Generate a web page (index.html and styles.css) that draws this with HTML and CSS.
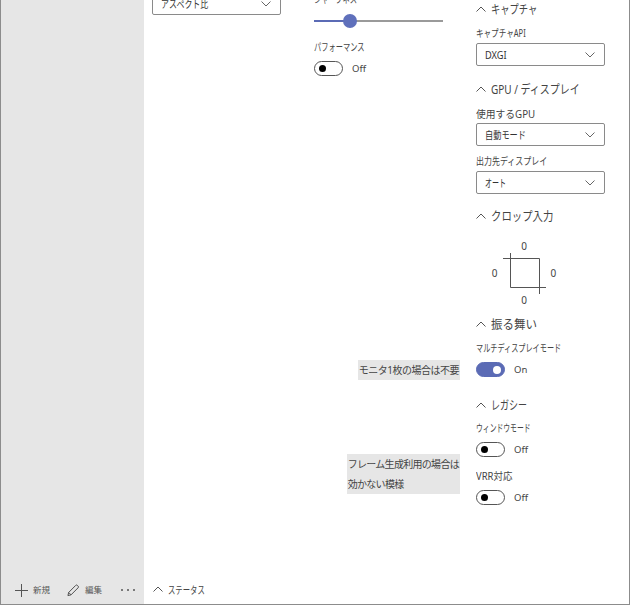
FILE: index.html
```html
<!DOCTYPE html>
<html lang="ja">
<head>
<meta charset="utf-8">
<title>設定</title>
<link rel="stylesheet" href="styles.css">
</head>
<body>
<div class="window">
  <aside class="sidebar">
    <div class="commands">
      <span class="cmd cmd-new"><svg class="icon-plus" width="13" height="13" viewBox="0 0 13 13"><path d="M6.500 0v13M0 6.500h13" stroke="#555" stroke-width="1" fill="none"/></svg><span class="cmd-text">新規</span></span>
      <span class="cmd cmd-edit"><svg class="icon-pen" width="12" height="13" viewBox="0 0 13 13"><path d="M1 12l.8-3.400L9.400 1a1.300 1.300 0 0 1 1.900 0l.7.7a1.300 1.300 0 0 1 0 1.900L4.400 11.200zM1.800 8.600l2.600 2.600" stroke="#444" stroke-width="1" fill="none"/></svg><span class="cmd-text">編集</span></span>
      <span class="cmd-more"><i></i><i></i><i></i></span>
    </div>
  </aside>
  <main class="main">
    <div class="panes">
      <section class="pane pane-one">
        <div class="select select-cut"><span class="sx sx76">アスペクト比</span><svg class="chev" width="10" height="6" viewBox="0 0 10 6"><path d="M.5.5L5 5 9.500.5" stroke="#666" fill="none"/></svg></div>
      </section>
      <section class="pane pane-two">
        <div class="label label-cut sx sx69">シャープネス</div>
        <div class="slider"><div class="slider-fill"></div><div class="slider-thumb"></div></div>
        <div class="label label-perf sx sx69">パフォーマンス</div>
        <div class="toggle-row"><span class="toggle"><i></i></span><span class="toggle-text">Off</span></div>
      </section>
      <section class="pane pane-three">
        <h3 class="group group-first"><svg class="up" width="10" height="6" viewBox="0 0 10 6"><path d="M.5 5.500L5 1l4.500 4.500" stroke="#555" fill="none"/></svg><span class="sx sx74">キャプチャ</span></h3>
        <div class="label sx sx72">キャプチャAPI</div>
        <div class="select"><span class="sx sx88">DXGI</span><svg class="chev" width="10" height="6" viewBox="0 0 10 6"><path d="M.5.5L5 5 9.500.5" stroke="#666" fill="none"/></svg></div>

        <h3 class="group group-gpu"><svg class="up" width="10" height="6" viewBox="0 0 10 6"><path d="M.5 5.500L5 1l4.500 4.500" stroke="#555" fill="none"/></svg><span class="sx sx80">GPU / ディスプレイ</span></h3>
        <div class="label label-tight sx sx93">使用するGPU</div>
        <div class="select"><span class="sx sx78">自動モード</span><svg class="chev" width="10" height="6" viewBox="0 0 10 6"><path d="M.5.5L5 5 9.500.5" stroke="#666" fill="none"/></svg></div>
        <div class="label label-next sx sx76">出力先ディスプレイ</div>
        <div class="select"><span class="sx sx67">オート</span><svg class="chev" width="10" height="6" viewBox="0 0 10 6"><path d="M.5.5L5 5 9.500.5" stroke="#666" fill="none"/></svg></div>

        <h3 class="group group-crop"><svg class="up" width="10" height="6" viewBox="0 0 10 6"><path d="M.5 5.500L5 1l4.500 4.500" stroke="#555" fill="none"/></svg><span class="sx sx83">クロップ入力</span></h3>
        <div class="crop">
          <span class="crop-num">0</span>
          <div class="crop-mid">
            <span class="crop-num">0</span>
            <svg width="43" height="41" viewBox="0 0 43 41"><path d="M7.500 0v34.500H43M0 5.500h36.500V41" stroke="#555" stroke-width="1" fill="none"/></svg>
            <span class="crop-num">0</span>
          </div>
          <span class="crop-num">0</span>
        </div>

        <h3 class="group group-behave"><svg class="up" width="10" height="6" viewBox="0 0 10 6"><path d="M.5 5.500L5 1l4.500 4.500" stroke="#555" fill="none"/></svg><span class="sx sx92">振る舞い</span></h3>
        <div class="label sx sx68">マルチディスプレイモード</div>
        <div class="toggle-row"><span class="toggle on"><i></i></span><span class="toggle-text">On</span><span class="note note-one">モニタ1枚の場合は不要</span></div>

        <h3 class="group group-legacy"><svg class="up" width="10" height="6" viewBox="0 0 10 6"><path d="M.5 5.500L5 1l4.500 4.500" stroke="#555" fill="none"/></svg><span class="sx sx72">レガシー</span></h3>
        <div class="label sx sx65">ウィンドウモード</div>
        <div class="toggle-row"><span class="toggle"><i></i></span><span class="toggle-text">Off</span></div>
        <div class="label label-vrr sx sx90">VRR対応</div>
        <div class="toggle-row"><span class="toggle"><i></i></span><span class="toggle-text">Off</span><span class="note note-two">フレーム生成利用の場合は<br>効かない模様</span></div>
      </section>
    </div>
    <div class="status"><svg class="up" width="10" height="6" viewBox="0 0 10 6"><path d="M.5 5.500L5 1l4.500 4.500" stroke="#555" fill="none"/></svg><span class="status-text sx sx70">ステータス</span></div>
  </main>
</div>
</body>
</html>
```
FILE: styles.css
```css
* { box-sizing: border-box; }
html, body { margin: 0; height: 100%; overflow: hidden; background: #fff; }
body {
  font-family: "Noto Sans", "Noto Sans CJK JP", sans-serif;
  color: #444;
}
.window {
  width: 630px;
  height: 605px;
  display: flex;
  border-left: 1px solid #8c8c8c;
  border-right: 1px solid #8c8c8c;
  border-bottom: 1px solid #8c8c8c;
  overflow: hidden;
}

.sx { display: block; transform-origin: 0 50%; white-space: nowrap; }
.sx65 { transform: scaleX(.65); }
.sx67 { transform: scaleX(.67); }
.sx68 { transform: scaleX(.68); }
.sx69 { transform: scaleX(.69); }
.sx70 { transform: scaleX(.7); }
.sx72 { transform: scaleX(.72); }
.sx74 { transform: scaleX(.74); }
.sx76 { transform: scaleX(.76); }
.sx78 { transform: scaleX(.78); }
.sx80 { transform: scaleX(.8); }
.sx83 { transform: scaleX(.83); }
.sx88 { transform: scaleX(.88); }
.sx90 { transform: scaleX(.9); }
.sx92 { transform: scaleX(.92); }
.sx93 { transform: scaleX(.93); }

.sidebar {
  width: 143px;
  flex: none;
  background: #e6e6e6;
  display: flex;
  flex-direction: column;
  justify-content: flex-end;
}
.commands {
  height: 28px;
  padding-left: 14px;
  display: flex;
  align-items: center;
}
.cmd { display: flex; align-items: center; }
.cmd-text { font-size: 8.500px; color: #555; line-height: 12px; }
.cmd-new .cmd-text { margin-left: 5px; }
.cmd-edit { margin-left: 17px; }
.cmd-edit .cmd-text { margin-left: 6px; }
.cmd-more { margin-left: 19px; display: flex; gap: 4px; }
.cmd-more i { width: 2px; height: 2px; background: #555; border-radius: 50%; }

.main { flex: 1; min-width: 0; display: flex; flex-direction: column; }
.panes { flex: 1; min-height: 0; display: flex; padding-left: 8px; }
.pane { width: 130px; flex: none; display: flex; flex-direction: column; }
.pane-two { margin-left: 32px; }
.pane-three { margin-left: 32px; }

.select {
  width: 129px;
  height: 23px;
  flex: none;
  background: #fff;
  border: 1px solid #8a8a8a;
  border-radius: 2px;
  padding: 0 8px;
  display: flex;
  align-items: center;
  justify-content: space-between;
  font-size: 10.500px;
  color: #333;
}
.select-cut { margin-top: -8px; }
.chev { margin-right: 1px; }

.label { font-size: 10.500px; line-height: 14px; height: 14px; color: #444; }
.label-cut { margin-top: -8px; }
.label + .select { margin-top: 3px; }
.label-tight + .select { margin-top: 2px; }
.label-next { margin-top: 8px; }
.label-perf { margin-top: 18px; }
.label-vrr { margin-top: 12px; }

.slider { position: relative; width: 129px; height: 2px; margin-top: 14px; background: #9a9a9a; }
.slider-fill { width: 36px; height: 2px; background: #5b6bb5; }
.slider-thumb { position: absolute; left: 29px; top: -6px; width: 14px; height: 14px; border-radius: 50%; background: #5f70bb; }

.toggle-row { display: flex; align-items: center; height: 15px; margin-top: 7px; position: relative; }
.toggle { width: 29px; height: 15px; border: 1px solid #555; border-radius: 8px; position: relative; flex: none; display: block; background: #fff; }
.toggle i { position: absolute; left: 4px; top: 3px; width: 7px; height: 7px; border-radius: 50%; background: #000; }
.toggle.on { background: #5b6bb5; border-color: #5b6bb5; }
.toggle.on i { left: auto; right: 3px; top: 2.500px; background: #fff; width: 8px; height: 8px; }
.toggle-text { font-size: 9.500px; margin-left: 9px; color: #444; }

.group {
  font-weight: 400;
  font-size: 12.500px;
  line-height: 18px;
  height: 18px;
  color: #444;
  display: flex;
  align-items: center;
  white-space: nowrap;
  margin: 14px 0 8px;
}
.group .up { margin-right: 5px; flex: none; }
.group .sx { padding-top: 2px; }
.group-first { margin-top: 0; }
.group-gpu { margin-bottom: 9px; }
.group-crop { margin: 13px 0 0; }
.group-behave { margin: 0 0 8px; }
.group-legacy { margin: 19px 0 7px; }

.crop { display: flex; flex-direction: column; align-items: center; width: 96px; margin: 15px 0 8px; }
.crop-num { font-size: 10px; line-height: 13px; color: #444; }
.crop-mid { display: flex; align-items: center; gap: 5px; }

.note {
  position: absolute;
  right: calc(100% + 16px);
  background: #e6e6e6;
  color: #444;
  font-size: 10px;
  line-height: 20px;
  letter-spacing: -.7px;
  white-space: nowrap;
  padding: 0 1px;
}
.note-one { top: -2px; letter-spacing: -.5px; }
.note-two { top: -36px; }

.status { height: 28px; flex: none; padding: 0 0 2px 9px; display: flex; align-items: center; }
.status-text { font-size: 10.500px; margin-left: 5px; color: #444; }
```
